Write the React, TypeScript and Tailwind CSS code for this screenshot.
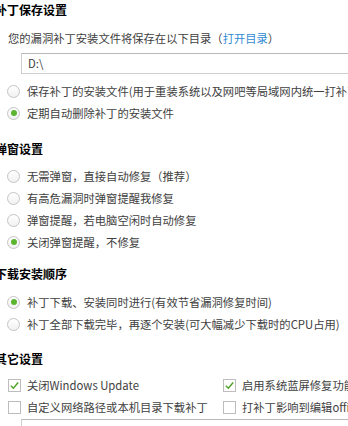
const font = "font-['Microsoft_YaHei','Noto_Sans_CJK_SC','Noto_Sans',sans-serif]";

function Heading({ children, className = "" }: { children: string; className?: string }) {
  return (
    <h3 className={`-ml-[5px] h-[18px] text-[12px] leading-[18px] font-bold text-black whitespace-nowrap ${className}`}>
      {children}
    </h3>
  );
}

function Radio({ label, checked = false }: { label: string; checked?: boolean }) {
  return (
    <div className="flex h-[22px] items-center whitespace-nowrap">
      <span className="ml-[7px] flex h-[13px] w-[13px] shrink-0 items-center justify-center rounded-full border border-[#c4c4c4] bg-gradient-to-b from-white to-[#f1f1f1]">
        {checked && <span className="h-[6px] w-[6px] rounded-full bg-[#5cb531]" />}
      </span>
      <span className="ml-[7px]">{label}</span>
    </div>
  );
}

function Check({ label, checked = false }: { label: string; checked?: boolean }) {
  return (
    <div className="flex h-[22px] items-center whitespace-nowrap">
      <span className="flex h-[13px] w-[13px] shrink-0 items-center justify-center border border-[#bdbdbd] bg-white">
        {checked && (
          <svg viewBox="0 0 12 12" className="h-[11px] w-[11px]">
            <path d="M2 6.2 L4.8 9 L10 2.8" fill="none" stroke="#4fa32a" strokeWidth="1.6" />
          </svg>
        )}
      </span>
      <span className="ml-[6px]">{label}</span>
    </div>
  );
}

export default function App() {
  return (
    <div className={`h-[426px] w-[348px] overflow-hidden bg-white text-[11.3px] text-[#404040] ${font}`}>
      <section className="pt-px">
        <Heading>补丁保存设置</Heading>
        <p className="mt-[10px] ml-[8px] h-[18px] leading-[18px] whitespace-nowrap">
          您的漏洞补丁安装文件将保存在以下目录（<span className="text-[#2f8ad4]">打开目录</span>）
        </p>
        <div className="mt-[6px] ml-[21px] flex h-[21px] w-[340px] items-center border border-[#cfcfcf] border-t-[#b8b8b8] pl-[6px]">
          D:\
        </div>
        <div className="mt-[6px]">
          <Radio label="保存补丁的安装文件(用于重装系统以及网吧等局域网内统一打补丁)" />
          <Radio label="定期自动删除补丁的安装文件" checked />
        </div>
      </section>

      <section className="mt-[16px]">
        <Heading>弹窗设置</Heading>
        <div className="mt-[7px]">
          <Radio label="无需弹窗，直接自动修复（推荐）" />
          <Radio label="有高危漏洞时弹窗提醒我修复" />
          <Radio label="弹窗提醒，若电脑空闲时自动修复" />
          <Radio label="关闭弹窗提醒，不修复" checked />
        </div>
      </section>

      <section className="mt-[12px]">
        <Heading>下载安装顺序</Heading>
        <div className="mt-[8px]">
          <Radio label="补丁下载、安装同时进行(有效节省漏洞修复时间)" checked />
          <Radio label="补丁全部下载完毕，再逐个安装(可大幅减少下载时的CPU占用)" />
        </div>
      </section>

      <section className="mt-[15px]">
        <Heading>其它设置</Heading>
        <div className="mt-[6px] ml-[8px] grid grid-cols-[215px_1fr]">
          <Check label="关闭Windows Update" checked />
          <Check label="启用系统蓝屏修复功能" checked />
          <Check label="自定义网络路径或本机目录下载补丁" />
          <Check label="打补丁影响到编辑office文档" />
        </div>
        <div className="mt-[1px] ml-[21px] h-[21px] w-[340px] border border-[#cfcfcf] border-t-[#b8b8b8]" />
      </section>
    </div>
  );
}
